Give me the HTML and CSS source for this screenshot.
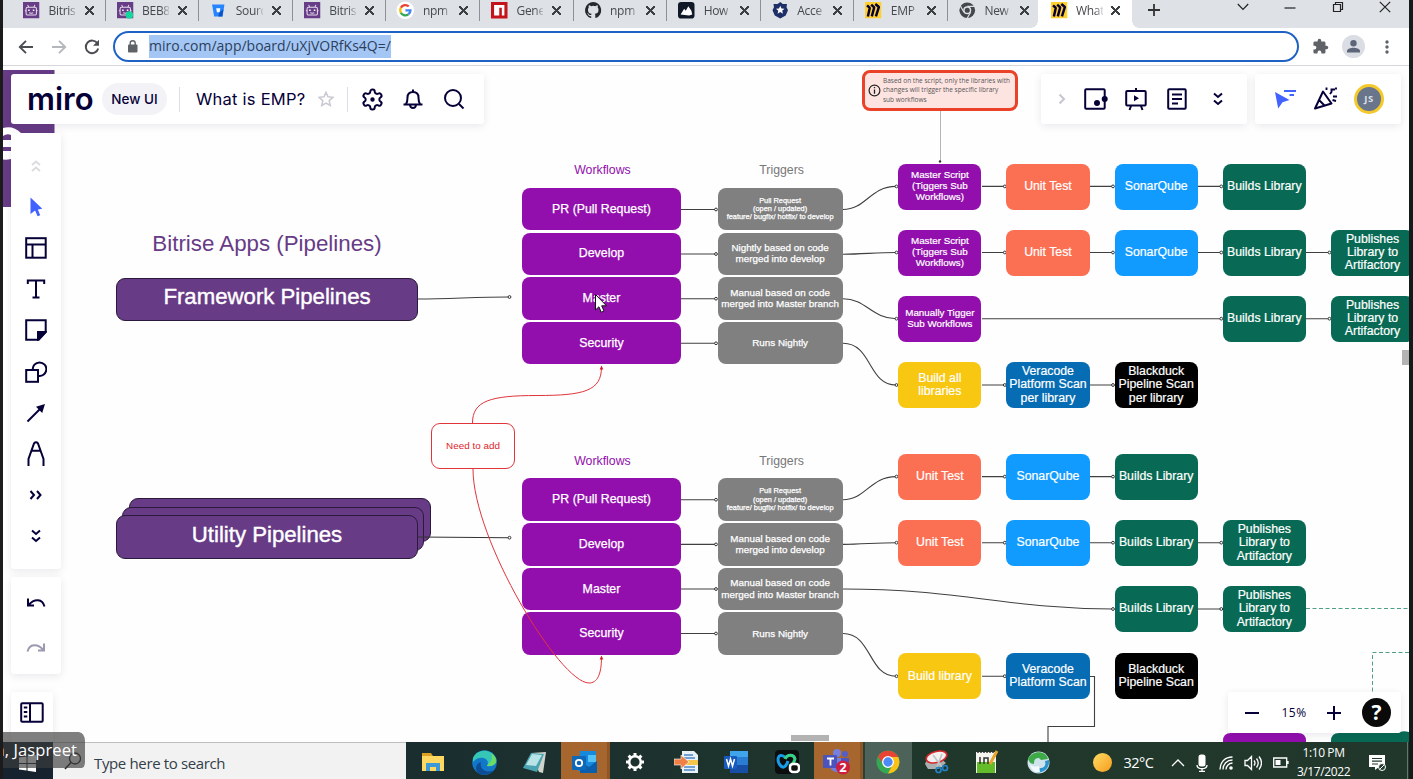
FILE: index.html
```html
<!DOCTYPE html>
<html lang="en">
<head>
<meta charset="utf-8">
<title>What is EMP?</title>
<link rel="stylesheet" href="styles.css">
</head>
<body>
<div class="screen">

  <!-- Board content -->
  <div class="canvas">
    <svg class="layer" width="1413" height="779" viewBox="0 0 1413 779">
      <path fill="#673b86" d="M3 70h51.5v63H11v74H3z"/>
      <path fill="#fff" d="M3 128q10-3 18 5H11v26q-4 1-8 .5z"/>
      <path fill="#673b86" d="M3 136q4-3 8-1v5H3zM3 147h8v4H3z"/>
      <path fill="none" stroke="#b5b5b5" d="M940.5 111v50"/>
      <circle cx="940" cy="161.500" r="1.200" fill="#333"/>
      <g fill="none" stroke="#404040" stroke-width="1.100">
        <path d="M418 299C450 299 475 297 509 297"/>
        <path d="M681 209.500h35M681 254h35M681 298.700h35M681 343.300h35"/>
        <path d="M681 499.700h35M681 544.400h35M681 589h35M681 633.500h35"/>
        <path d="M843 209.500C866 209.500 870 186.400 896 186.400"/>
        <path d="M843 254.200C862 254.200 876 252.500 896 252.500"/>
        <path d="M843 298.700C866 298.700 872 318.700 896 318.700"/>
        <path d="M843 343.300C872 343.300 868 385 896 385"/>
        <path d="M843 499.700C866 499.700 870 476.600 896 476.600"/>
        <path d="M843 544.400C862 544.400 876 542.700 896 542.700"/>
        <path d="M843 589C960 589 1010 609 1113 609"/>
        <path d="M843 633.500C872 633.500 868 676.200 896 676.200"/>
        <path d="M982 186.400h23M1090 186.400h23M1198 186.400h23M982 252.500h23M1090 252.500h23M1198 252.500h23M1306 252.500h23M982 318.700h239M1306 318.700h23M982 385h23M1090 385h23"/>
        <path d="M982 476.600h23M1090 476.600h23M982 542.700h23M1090 542.700h23M1198 542.700h23M1198 609h23M982 676.200h23"/>
        <path d="M1090 676.500h4.500v50h-46.500v16"/>
      </g>
      <g fill="#fff" stroke="#333" stroke-width="1">
        <circle cx="509.500" cy="297" r="1.400"/>
        <circle cx="716" cy="209.500" r="1.400"/><circle cx="716" cy="254" r="1.400"/><circle cx="716" cy="298.700" r="1.400"/><circle cx="716" cy="343.300" r="1.400"/>
        <circle cx="716" cy="499.700" r="1.400"/><circle cx="716" cy="544.400" r="1.400"/><circle cx="716" cy="589" r="1.400"/><circle cx="716" cy="633.500" r="1.400"/>
        <circle cx="896.500" cy="186.400" r="1.400"/><circle cx="896.500" cy="252.500" r="1.400"/><circle cx="896.500" cy="318.700" r="1.400"/><circle cx="896.500" cy="385" r="1.400"/>
        <circle cx="896.500" cy="476.600" r="1.400"/><circle cx="896.500" cy="542.700" r="1.400"/><circle cx="896.500" cy="676.200" r="1.400"/>
        <circle cx="1004.800" cy="186.400" r="1.400"/><circle cx="1004.800" cy="252.500" r="1.400"/><circle cx="1004.800" cy="385" r="1.400"/><circle cx="1004.800" cy="476.600" r="1.400"/><circle cx="1004.800" cy="542.700" r="1.400"/><circle cx="1004.800" cy="676.200" r="1.400"/>
        <circle cx="1113" cy="186.400" r="1.400"/><circle cx="1113" cy="252.500" r="1.400"/><circle cx="1113" cy="385" r="1.400"/><circle cx="1113" cy="476.600" r="1.400"/><circle cx="1113" cy="542.700" r="1.400"/><circle cx="1113" cy="609" r="1.400"/>
        <circle cx="1221.300" cy="186.400" r="1.400"/><circle cx="1221.300" cy="252.500" r="1.400"/><circle cx="1221.300" cy="318.700" r="1.400"/><circle cx="1221.300" cy="542.700" r="1.400"/><circle cx="1221.300" cy="609" r="1.400"/>
        <circle cx="1329.500" cy="252.500" r="1.400"/><circle cx="1329.500" cy="318.700" r="1.400"/>
      </g>
      <path fill="none" stroke="#4f9f88" stroke-dasharray="4 2.500" d="M1306 608.500h103M1409 652.500h-36.500v40"/>
      <path fill="#920fad" d="M1223 742v-1q0-8 8-8h67q8 0 8 8v1z"/>
      <path fill="#086a54" d="M1331 742v-1q0-8 8-8h59q4-3 11-1v10z"/>
    </svg>

    <h2 class="apps-title">Bitrise Apps (Pipelines)</h2>
    <div class="pipeline framework">Framework Pipelines</div>
    <div class="pipeline utility-back"></div>
    <div class="pipeline utility-mid"></div>
    <div class="pipeline utility">Utility Pipelines</div>

    <section class="stack workflows top">
      <h3>Workflows</h3>
      <div>PR (Pull Request)</div><div>Develop</div><div>Master</div><div>Security</div>
    </section>
    <section class="stack triggers top">
      <h3>Triggers</h3>
      <div class="tiny">Pull Request<br>(open / updated)<br>feature/ bugfix/ hotfix/ to develop</div>
      <div>Nightly based on code<br>merged into develop</div>
      <div>Manual based on code<br>merged into Master branch</div>
      <div>Runs Nightly</div>
    </section>
    <section class="stack workflows bottom">
      <h3>Workflows</h3>
      <div>PR (Pull Request)</div><div>Develop</div><div>Master</div><div>Security</div>
    </section>
    <section class="stack triggers bottom">
      <h3>Triggers</h3>
      <div class="tiny">Pull Request<br>(open / updated)<br>feature/ bugfix/ hotfix/ to develop</div>
      <div>Manual based on code<br>merged into develop</div>
      <div>Manual based on code<br>merged into Master branch</div>
      <div>Runs Nightly</div>
    </section>

    <div class="node c1 r1 script">Master Script<br>(Tiggers Sub<br>Workflows)</div>
    <div class="node c2 r1 test">Unit Test</div>
    <div class="node c3 r1 sonar">SonarQube</div>
    <div class="node c4 r1 lib">Builds Library</div>

    <div class="node c1 r2 script">Master Script<br>(Tiggers Sub<br>Workflows)</div>
    <div class="node c2 r2 test">Unit Test</div>
    <div class="node c3 r2 sonar">SonarQube</div>
    <div class="node c4 r2 lib">Builds Library</div>
    <div class="node c5 r2 lib">Publishes<br>Library to<br>Artifactory</div>

    <div class="node c1 r3 script">Manually Tigger<br>Sub Workflows</div>
    <div class="node c4 r3 lib">Builds Library</div>
    <div class="node c5 r3 lib">Publishes<br>Library to<br>Artifactory</div>

    <div class="node c1 r4 build">Build all<br>libraries</div>
    <div class="node c2 r4 vera">Veracode<br>Platform Scan<br>per library</div>
    <div class="node c3 r4 duck">Blackduck<br>Pipeline Scan<br>per library</div>

    <div class="node c1 r5 test">Unit Test</div>
    <div class="node c2 r5 sonar">SonarQube</div>
    <div class="node c3 r5 lib">Builds Library</div>

    <div class="node c1 r6 test">Unit Test</div>
    <div class="node c2 r6 sonar">SonarQube</div>
    <div class="node c3 r6 lib">Builds Library</div>
    <div class="node c4 r6 lib">Publishes<br>Library to<br>Artifactory</div>

    <div class="node c3 r7 lib">Builds Library</div>
    <div class="node c4 r7 lib">Publishes<br>Library to<br>Artifactory</div>

    <div class="node c1 r8 build">Build library</div>
    <div class="node c2 r8 vera">Veracode<br>Platform Scan</div>
    <div class="node c3 r8 duck">Blackduck<br>Pipeline Scan</div>

    <div class="callout">
      <svg width="13" height="13" viewBox="0 0 13 13"><circle cx="6.500" cy="6.500" r="5.400" fill="none" stroke="#222" stroke-width="1.200"/><path stroke="#222" stroke-width="1.300" d="M6.500 3v1.300M6.500 5.500v4.200"/></svg>
      <p>Based on the script, only the libraries with<br>changes will trigger the specific library<br>sub workflows</p>
    </div>
    <div class="need">Need to add</div>

    <svg class="layer" width="1413" height="779" viewBox="0 0 1413 779">
      <path fill="none" stroke="#333" stroke-width="1.100" d="M418 537L509 537.800"/>
      <circle cx="509.500" cy="537.700" r="1.400" fill="#fff" stroke="#333"/>
      <g fill="none" stroke="#e0353b" stroke-width="1">
        <path d="M472.500 423C472.500 401 490 395.500 537 395.500S601.500 391 601.500 367"/>
        <path d="M473 469C473 540 560 683 589 683C597 683 601.500 675 601.500 657"/>
      </g>
      <path fill="#d81e26" d="M601.500 365.500l1.800 4h-3.600zM601.500 655.500l1.800 4h-3.600z"/>
      <path fill="#fff" stroke="#111" stroke-width="1" d="M595.500 294.500v15.500l3.400-3.200 2.300 5.400 2.800-1.200-2.300-5.200h4.800z"/>
    </svg>
    <i class="thumb thumb-v"></i>
    <i class="thumb thumb-h"></i>
  </div>

  <!-- Browser tabs -->
  <header class="tabs">
    <div class="tab"><svg class="fav" viewBox="0 0 16 16"><use href="#bot"/></svg><span>Bitris</span><b></b></div>
    <div class="tab"><svg class="fav" viewBox="0 0 16 16"><use href="#bot"/><circle cx="12" cy="12.500" r="3.600" fill="#12d99b"/></svg><span>BEB8</span><b></b></div>
    <div class="tab"><svg class="fav" viewBox="0 0 16 16"><path fill="#2684ff" d="M2 2.500h12l-1.800 11.500H4z"/><path fill="#0b55c9" d="M9 10l4-3-1 7H8z"/><path fill="#fff" d="M6 6h4l-.7 4H6.700z"/></svg><span>Sourc</span><b></b></div>
    <div class="tab"><svg class="fav" viewBox="0 0 16 16"><use href="#bot"/></svg><span>Bitris</span><b></b></div>
    <div class="tab"><svg class="fav" viewBox="0 0 16 16"><circle cx="8" cy="8" r="8.500" fill="#fff"/><g fill="none" stroke-width="2.300"><path stroke="#ea4335" d="M3.700 5.600A5 5 0 0 1 11.400 4.300"/><path stroke="#fbbc05" d="M3.700 5.600A5 5 0 0 0 3.700 10.400"/><path stroke="#34a853" d="M3.700 10.400A5 5 0 0 0 11 12"/><path stroke="#4285f4" d="M11 12A5 5 0 0 0 13 8.100H8.200"/></g></svg><span>npm</span><b></b></div>
    <div class="tab"><svg class="fav" viewBox="0 0 16 16"><path fill="#c4131b" d="M0 0h16v16H0z"/><path fill="#fff" d="M3 3h10v10h-2.500V5.500H8V13H3z"/></svg><span>Gene</span><b></b></div>
    <div class="tab"><svg class="fav" viewBox="0 0 16 16"><path fill="#24292e" d="M8 0a8 8 0 0 0-2.500 15.600c.4.100.5-.2.500-.4v-1.500c-2.200.5-2.700-1-2.700-1-.4-.9-.9-1.200-.9-1.200-.7-.5.100-.5.100-.5.800.1 1.200.8 1.200.8.700 1.300 1.900.9 2.300.7.100-.5.300-.9.500-1.100-1.800-.2-3.600-.9-3.600-4 0-.9.300-1.600.8-2.100-.1-.2-.4-1 .1-2.100 0 0 .7-.2 2.200.8a7.500 7.500 0 0 1 4 0c1.500-1 2.200-.8 2.200-.8.400 1.100.2 1.900.1 2.100.5.600.8 1.300.8 2.100 0 3.100-1.900 3.800-3.700 4 .3.300.6.800.6 1.500v2.200c0 .2.100.5.500.4A8 8 0 0 0 8 0z"/></svg><span>npm</span><b></b></div>
    <div class="tab"><svg class="fav" viewBox="0 0 16 16"><rect width="16" height="16" rx="3" fill="#111827"/><path fill="#fff" d="M2.500 12L6 6.500l1.500 2L10 4l3 4.500.8 3.500-3 1.200z"/></svg><span>How</span><b></b></div>
    <div class="tab"><svg class="fav" viewBox="0 0 16 16"><path fill="#1d2f66" d="M8 0l2.500 2h4l-.4 3 1.400 3-2.200 5L8 16l-5.300-3L.5 8l1.400-3-.4-3h4z"/><path fill="#fff" d="M8 3.600l1.200 2.700 2.900.2-2.200 1.900.7 2.900L8 9.800l-2.600 1.500.7-2.900-2.200-1.900 2.900-.2z"/></svg><span>Acce</span><b></b></div>
    <div class="tab"><svg class="fav" viewBox="0 0 16 16"><use href="#miro"/></svg><span>EMP</span><b></b></div>
    <div class="tab"><svg class="fav" viewBox="0 0 16 16"><circle cx="8" cy="8" r="7.600" fill="#44474b"/><circle cx="8" cy="8" r="3.200" fill="#44474b" stroke="#dee1e6" stroke-width="1.400"/><path stroke="#dee1e6" stroke-width="1.100" fill="none" d="M8 4.200h7M4.800 10L1.400 4M11.200 10l-3.400 6"/></svg><span>New</span><b></b></div>
    <div class="tab active"><svg class="fav" viewBox="0 0 16 16"><use href="#miro"/></svg><span>What</span><b></b></div>
    <svg class="plus" width="14" height="14" viewBox="0 0 14 14"><path stroke="#333" stroke-width="1.800" d="M7 1v12M1 7h12"/></svg>
    <div class="window">
      <svg width="12" height="12" viewBox="0 0 12 12"><path d="M.8 3l5.200 5.500L11.200 3"/></svg>
      <svg width="12" height="12" viewBox="0 0 12 12"><path d="M.5 7h11"/></svg>
      <svg width="12" height="12" viewBox="0 0 12 12"><path d="M1.500 3.500h7v7h-7zM3.500 3.500v-2h7v7h-2"/></svg>
      <svg width="12" height="12" viewBox="0 0 12 12"><path d="M.8.800l10.400 10.400M11.200.800L.8 11.200"/></svg>
    </div>
  </header>

  <!-- Address bar -->
  <div class="address">
    <svg class="nav" width="16" height="16" viewBox="0 0 16 16"><path d="M15 8H2M8 1.800L1.800 8 8 14.200" stroke="#4a4d51"/></svg>
    <svg class="nav" width="16" height="16" viewBox="0 0 16 16"><path d="M1 8h13M8 1.800L14.200 8 8 14.200" stroke="#b4b7bb"/></svg>
    <svg class="nav" width="16" height="16" viewBox="0 0 16 16"><path d="M13.500 4.600A6.300 6.300 0 1 0 14.200 9.500" stroke="#4a4d51"/><path fill="#4a4d51" d="M15 .8v6H9z"/></svg>
    <div class="omnibox">
      <svg width="10" height="13" viewBox="0 0 10 13"><rect y="4.500" width="9.500" height="8" rx="1" fill="#5f6368"/><path fill="none" stroke="#5f6368" stroke-width="1.400" d="M2.200 5V3.200a2.500 2.500 0 0 1 5 0V5"/></svg>
      <span>miro.com/app/board/uXjVORfKs4Q=/</span>
    </div>
    <svg class="puzzle" width="17" height="17" viewBox="0 0 24 24"><path fill="#5f6368" d="M20.500 11H19V7a2 2 0 0 0-2-2h-4V3.500a2.500 2.500 0 0 0-5 0V5H4a2 2 0 0 0-2 2v3.800h1.500a2.700 2.700 0 0 1 0 5.400H2V20a2 2 0 0 0 2 2h3.800v-1.500a2.700 2.700 0 0 1 5.400 0V22H17a2 2 0 0 0 2-2v-4h1.500a2.500 2.500 0 0 0 0-5z"/></svg>
    <svg class="person" width="23" height="23" viewBox="0 0 23 23"><circle cx="11.500" cy="11.500" r="11.500" fill="#dadde3"/><circle cx="11.500" cy="8.300" r="3.200" fill="#5d6678"/><path fill="#5d6678" d="M5 17.500v-1.500c0-2.400 4-3.300 6.500-3.300s6.500.9 6.500 3.300v1.500z"/></svg>
    <svg class="dots" width="4" height="14" viewBox="0 0 4 14"><g fill="#5f6368"><circle cx="2" cy="2" r="1.700"/><circle cx="2" cy="7" r="1.700"/><circle cx="2" cy="12" r="1.700"/></g></svg>
  </div>

  <!-- Miro interface -->
  <main class="app">
    <div class="app-head">
      <div class="panel board-bar">
        <strong class="logo">miro</strong>
        <span class="pill">New UI</span>
        <i class="rule"></i>
        <span class="board-name">What is EMP?</span>
        <svg class="star" width="16" height="16" viewBox="0 0 16 16"><path fill="none" stroke="#c9c9d3" stroke-width="1.500" d="M8 1.200l2 4.600 5 .5-3.800 3.300 1.100 4.900L8 12l-4.300 2.500 1.100-4.900L1 6.300l5-.5z"/></svg>
        <i class="rule"></i>
        <svg class="ic" width="23" height="23" viewBox="0.500 0.500 23 23"><path d="M12.220 2h-.44a2 2 0 0 0-2 2v.18a2 2 0 0 1-1 1.730l-.43.25a2 2 0 0 1-2 0l-.15-.08a2 2 0 0 0-2.730.73l-.22.38a2 2 0 0 0 .73 2.730l.15.1a2 2 0 0 1 1 1.720v.51a2 2 0 0 1-1 1.740l-.15.09a2 2 0 0 0-.73 2.730l.22.38a2 2 0 0 0 2.730.73l.15-.08a2 2 0 0 1 2 0l.43.25a2 2 0 0 1 1 1.730V20a2 2 0 0 0 2 2h.44a2 2 0 0 0 2-2v-.18a2 2 0 0 1 1-1.730l.43-.25a2 2 0 0 1 2 0l.15.08a2 2 0 0 0 2.730-.73l.22-.39a2 2 0 0 0-.73-2.730l-.15-.08a2 2 0 0 1-1-1.740v-.5a2 2 0 0 1 1-1.740l.15-.09a2 2 0 0 0 .73-2.730l-.22-.38a2 2 0 0 0-2.730-.73l-.15.08a2 2 0 0 1-2 0l-.43-.25a2 2 0 0 1-1-1.730V4a2 2 0 0 0-2-2z"/><circle cx="12" cy="12" r="1.200" fill="#050038"/></svg>
        <svg class="ic bell" width="22" height="22" viewBox="0 0 22 22"><path d="M1.500 16.500h19M4 16c1.500-2 1.500-4 1.500-6.500C5.500 6 7.500 4 11 4s5.500 2 5.500 5.500c0 2.500 0 4.500 1.500 6.500M11 4V1.500M8 17c.5 4 5.500 4 6 0"/></svg>
        <svg class="ic" width="22" height="22" viewBox="0 0 22 22"><circle cx="10" cy="10" r="8"/><path d="M16 16l4.500 4.500"/></svg>
      </div>
      <div class="panel tools-bar">
        <svg class="ic chev" width="8" height="12" viewBox="0 0 8 12"><path stroke="#c6c6d0" d="M1.500 1.500L6 6l-4.500 4.500"/></svg>
        <svg class="ic" width="24" height="22" viewBox="0 0 24 22"><rect x="1.200" y="1.200" width="19.500" height="19.500" rx="1"/><circle cx="13" cy="15" r="3" fill="#050038" stroke="none"/><circle cx="20.700" cy="11" r="3" fill="#050038" stroke="none"/></svg>
        <svg class="ic" width="22" height="24" viewBox="0 0 22 24"><rect x="1.200" y="4" width="19.500" height="14.500" rx="1"/><path d="M11 1v3M6 19l-1.500 4M16 19l1.500 4"/><path fill="#050038" stroke="none" d="M9 8.300l5 3-5 3z"/></svg>
        <svg class="ic" width="20" height="22" viewBox="0 0 20 22"><rect x="1.200" y="1.200" width="17.500" height="19.500" rx="1"/><path d="M5 6.500h10M5 11h10M5 15.500h6"/></svg>
        <svg class="ic" width="12" height="14" viewBox="0 0 12 14"><path d="M2 1.500l4 3.500 4-3.500M2 8.500L6 12l4-3.500"/></svg>
      </div>
      <div class="panel user-bar">
        <svg class="ic" width="22" height="20" viewBox="0 0 22 20"><path fill="#4262ff" stroke="none" d="M0 3l14.500 8-7 2.200-4.300 6.300z"/><path stroke="#4262ff" stroke-width="1.800" d="M9 2h12M14.500 6h4.500"/></svg>
        <svg class="ic" width="25" height="24" viewBox="0 0 25 24"><path stroke-linejoin="round" d="M10 4.500L2 21.500l16.500-5zM6 13l6 6"/><path stroke-width="1.900" d="M13.500.5v2.500M17 7l1.500-2V2.500h3.500M20 9.500h4M19.500 13l3.500 1M23 .5v2"/></svg>
        <span class="avatar">JS</span>
      </div>
    </div>

    <div class="app-body">
      <nav class="rail">
        <div class="panel rail-main">
          <span><svg class="ic" width="12" height="14" viewBox="0 0 12 14"><path stroke="#dcdce0" d="M2 6l4-3.500L10 6M2 12l4-3.500 4 3.500"/></svg></span>
          <span><svg class="ic" width="14" height="22" viewBox="0 0 14 22"><path fill="#4262ff" stroke="none" d="M1.500 1.500l11.800 11.300-4.500.7 2.400 5.800-2.600 1-2.500-5.800-4.600 3.500z"/></svg></span>
          <span><svg class="ic" width="22" height="22" viewBox="0 0 22 22"><rect x="1.200" y="1.200" width="19.500" height="19.500"/><path d="M1 7.500h20M7.500 7.500V21"/></svg></span>
          <span><svg class="ic" width="20" height="20" viewBox="0 0 20 20"><path d="M1.800 5V1.500h16.400V5M10 1.500v17M6.500 18.500h7"/></svg></span>
          <span><svg class="ic" width="22" height="22" viewBox="0 0 22 22"><path d="M1.200 1.200h19.500v12l-7 7.500H1.200z"/><path fill="#050038" d="M20.500 13l-7.500 7.500V13z"/></svg></span>
          <span><svg class="ic" width="22" height="22" viewBox="0 0 22 22"><rect x="1.200" y="9" width="11.800" height="11.800"/><path d="M7.800 9a6.800 6.800 0 1 1 5.200 5.800"/></svg></span>
          <span><svg class="ic" width="20" height="20" viewBox="0 0 20 20"><path d="M1.500 18.500L14 6"/><path fill="#050038" stroke="none" d="M19 1l-2.800 9L10 3.800z"/></svg></span>
          <span><svg class="ic" width="18" height="26" viewBox="0 0 18 26"><path d="M1.500 25v-7L7 2.500Q9 .2 11 2.500L16.500 18v7M5 9.700h8"/></svg></span>
          <span><svg class="ic" width="14" height="12" viewBox="0 0 14 12"><path d="M1.500 2L5 6l-3.500 4M8 2l3.500 4L8 10"/></svg></span>
          <span><svg class="ic" width="12" height="14" viewBox="0 0 12 14"><path d="M2 1.500l4 3.500 4-3.500M2 8.500L6 12l4-3.500"/></svg></span>
        </div>
        <div class="panel rail-history">
          <span><svg class="ic" width="20" height="10" viewBox="0 0 20 10"><path d="M2 .5v7h6M2.500 7Q7 1.800 12 2.200T18.500 8.500"/></svg></span>
          <span><svg class="ic" width="20" height="10" viewBox="0 0 20 10"><path stroke="#9b99af" d="M18 .5v7h-6M17.500 7Q13 1.800 8 2.200T1.500 8.500"/></svg></span>
        </div>
        <div class="panel rail-frames">
          <svg class="ic" width="24" height="21" viewBox="0 0 24 21"><rect x="1.200" y="1.200" width="21.500" height="18.500" rx="1"/><path d="M10 1v19M3.800 5.500h3.500M3.800 10h3.500M3.800 14.500h3.500"/></svg>
        </div>
      </nav>
      <div class="panel zoom-bar">
        <svg class="ic" width="14" height="14" viewBox="0 0 14 14"><path d="M0 7h14"/></svg>
        <span>15%</span>
        <svg class="ic" width="14" height="14" viewBox="0 0 14 14"><path d="M0 7h14M7 0v14"/></svg>
        <b class="help">?</b>
      </div>
    </div>
  </main>

  <!-- Windows taskbar -->
  <footer class="taskbar">
    <div class="start"><svg width="17" height="17" viewBox="0 0 17 17"><path fill="#fff" d="M0 2.500l7.500-1V8H0zM8.500 1.300L17 0v8H8.500zM0 9h7.500v6.500l-7.500-1zM8.500 9H17v8l-8.500-1.300z"/></svg></div>
    <div class="search">
      <svg width="18" height="18" viewBox="0 0 18 18"><circle cx="11" cy="6.500" r="5.500" fill="none" stroke="#222" stroke-width="1.300"/><path stroke="#222" stroke-width="1.500" d="M7 10.500L1 17"/></svg>
      <span>Type here to search</span>
    </div>
    <div class="apps">
      <span><svg width="22" height="20" viewBox="0 0 22 20"><path fill="#dba122" d="M0 1h9l2 3v14H0z"/><path fill="#ffd862" d="M0 4h22v15H0z"/><path fill="#3d9ad9" d="M4 11h14v8h-4v-4H8v4H4z"/></svg></span>
      <span><svg width="25" height="25" viewBox="0 0 25 25"><circle cx="12.500" cy="12.500" r="12.300" fill="#1277c9"/><path fill="#36c6b6" d="M1 8C5-1 19-2 24 8c2 6-3 9-9 8 3-5-2-9-7-8-3 0-5 2-7 4z"/><path fill="#6edb62" d="M19 3c7 5 7 13-2 13-2 0-2 0-2-.5 5-4 6-8 4-12.500z"/><path fill="#0c4d95" d="M9 12c-2 7 6 12 13 8-4 6-18 7-18-2 0-3 2-5 5-6z"/></svg></span>
      <span><svg width="24" height="23" viewBox="0 0 24 23"><path fill="#cfd4cc" d="M8 2l15-1-3 21-4-1z"/><path fill="#4aa3b0" d="M0 17L8 2l13 1-7 18z"/><path fill="#b8e4e8" d="M3 14L9 3l10 1-6 11z"/></svg></span>
      <span class="alert"><svg width="25" height="23" viewBox="0 0 25 23"><path fill="#1689dc" d="M8 0h16v20H6z"/><path fill="#52c1f5" d="M16 4h8v7h-8z"/><path fill="#0b5eab" d="M8 22V11l9 5 8-6v12z"/><rect y="5" width="14" height="14" rx="1" fill="#0f67b7"/><circle cx="7" cy="12" r="3.200" fill="none" stroke="#fff" stroke-width="1.800"/></svg></span>
      <span><svg width="20" height="20" viewBox="0 0 20 20"><circle cx="10" cy="10" r="5.800" fill="none" stroke="#fff" stroke-width="2.500"/><path stroke="#fff" stroke-width="3" d="M10 1v3M10 16v3M1 10h3M16 10h3M3.600 3.600l2 2M14.400 14.400l2 2M3.600 16.400l2-2M14.400 5.600l2-2"/></svg></span>
      <span><svg width="25" height="24" viewBox="0 0 25 24"><path fill="#e9f1f8" d="M8 1h12l4 4v18H8z"/><path stroke="#4a87c5" stroke-width="1.500" d="M10 5h9M10 8h11M10 17h11M10 20h11"/><path fill="#f4c64e" d="M12 10h12v5H12z"/><path fill="#f08045" stroke="#fff" stroke-width=".6" d="M0 9h7V5l8 7-8 7v-4H0z"/></svg></span>
      <span><svg width="25" height="23" viewBox="0 0 25 23"><path fill="#2b7cd3" d="M6 0h18v22H6z"/><path fill="#41a5ee" d="M6 0h18v6H6z"/><path fill="#174ea6" d="M6 14h18v8H6z"/><rect y="5" width="13" height="13" rx="1" fill="#185abd"/><path fill="none" stroke="#fff" stroke-width="1.500" d="M2.500 8l2 7 2-7 2 7 2-7"/></svg></span>
      <span><svg width="25" height="25" viewBox="0 0 25 25"><rect width="24" height="24" rx="4" fill="#0b0d0f"/><path fill="none" stroke="#169be8" stroke-width="3" d="M10 7c-8-5-8 4-5 8s6 2 8-4"/><path fill="none" stroke="#37d18a" stroke-width="3" d="M10 9c2-5 9-5 10 0-1 4-3 6-6 7"/><rect x="15" y="14" width="9" height="8" rx="3" fill="#111" stroke="#fff" stroke-width="2.500"/></svg></span>
      <span class="alert"><svg width="27" height="26" viewBox="0 0 27 26"><circle cx="14" cy="4" r="4" fill="#7780df"/><circle cx="22" cy="5" r="3" fill="#545ec4"/><path fill="#747de0" d="M8 9h12v11c-3 4-9 4-12 0z"/><path fill="#4d56bd" d="M18 9h8v8h-8z"/><rect y="6" width="14" height="13" rx="1" fill="#4b53bc"/><path stroke="#fff" stroke-width="1.800" d="M4 9.500h7M7.500 9.500v7"/><circle cx="20" cy="18.500" r="7" fill="#ce1e3f"/><text class="badge" x="20" y="23" text-anchor="middle">2</text></svg></span>
      <span class="open"><svg width="24" height="24" viewBox="0 0 24 24"><circle cx="12" cy="12" r="11.500" fill="#35a853"/><path fill="#e84335" d="M2 6.500A11.500 11.500 0 0 1 22.300 7H12L7 14z"/><path fill="#fbc116" d="M12 7h10.300A11.500 11.500 0 0 1 12 23.500L17 14z"/><circle cx="12" cy="12" r="5.300" fill="#4c8bf5" stroke="#fff" stroke-width="1.300"/></svg></span>
      <span><svg width="25" height="24" viewBox="0 0 25 24"><path fill="#aab0b0" d="M1 14C3 8 8 6 16 8l6 5-8 6H4z"/><ellipse cx="12.500" cy="7" rx="10.500" ry="5.500" fill="#f5f0f0" stroke="#d8292c" stroke-width="1.600" transform="rotate(-15 12.500 7)"/><path stroke="#bfc4c6" stroke-width="1.600" d="M9 5l9 12M18 4l-5 13"/><g fill="none" stroke="#2382c5" stroke-width="1.700"><circle cx="14.500" cy="20" r="2.500"/><circle cx="21" cy="18" r="2.500"/></g></svg></span>
      <span><svg width="23" height="24" viewBox="0 0 23 24"><path fill="#f4f6ef" d="M0 2h20v21H0z"/><path fill="#63bd2b" d="M1 12h18v11H1z"/><path stroke="#333" stroke-width="1.500" stroke-dasharray="2 1" d="M1 2h18"/><path fill="none" stroke="#333" stroke-width="1.500" d="M4 14V7M8 14V8h4v6"/><path stroke="#e7a32b" stroke-width="3" d="M21 1l-7 13"/></svg></span>
      <span><svg width="23" height="23" viewBox="0 0 23 23"><circle cx="11.500" cy="11.500" r="11" fill="#cfe3ed"/><path fill="#3daa47" d="M1 8C5-1 19-1 21 8l-7 1-2-2c-4 0-5 2-5 6-3 0-5-2-6-5z"/><path fill="#2b93cf" d="M22 9c1 8-6 14-13 12l4-4c5 0 6-3 5-7z"/><path fill="#f4fafc" d="M3 13c2 3 6 3 9 2l1 6c-5 1-9-2-10-8z"/></svg></span>
    </div>
    <div class="tray">
      <i class="sun"></i>
      <span class="temp">32°C</span>
      <svg class="tr" width="14" height="10" viewBox="0 0 14 10"><path d="M1 8l6-6 6 6"/></svg>
      <svg class="tr" width="12" height="18" viewBox="0 0 12 18"><rect x="2.500" y=".5" width="7" height="12" rx="2.500" fill="#fff" stroke="none"/><path d="M1 11c0 5 10 5 10 0M6 14v3.500M3 17.300h6"/></svg>
      <svg class="tr" width="14" height="14" viewBox="0 0 14 14"><path d="M1 13.500C1 6 6 1 13.500 1M4 13.500C4 8 8 4 13.500 4M7 13.500C7 10 10 7 13.500 7"/><circle cx="12" cy="12" r="1.800" fill="#fff" stroke="none"/></svg>
      <svg class="tr" width="18" height="16" viewBox="0 0 18 16"><path d="M1 5.500h2.500l4-4v13l-4-4H1zM10 5.500q2 2.500 0 5M12.500 3.500q3.500 4.500 0 9M15 1.500q5 6.500 0 13"/></svg>
      <svg class="tr" width="16" height="11" viewBox="0 0 16 11"><path d="M.7 1h13v9H.7zM15 4v3"/><path fill="#fff" stroke="none" d="M2.500 3h5v5h-5z"/></svg>
      <div class="clock"><span>1:10 PM</span><span>3/17/2022</span></div>
      <svg class="note" width="18" height="18" viewBox="0 0 18 18"><path fill="#fff" d="M0 1h16v12h-6l-4 3v-3H0z"/><path stroke="#213b2e" stroke-width="1.200" d="M3 4.500h10M3 7.200h10M3 10h6"/><circle cx="13" cy="13" r="3.500" fill="#213b2e" stroke="#fff"/><path stroke="#fff" d="M10.500 15.500l5-5"/></svg>
      <i class="peek"></i>
    </div>
  </footer>

  <div class="speaker">n, Jaspreet</div>
</div>

<svg class="defs" width="0" height="0">
  <symbol id="bot" viewBox="0 0 16 16"><path fill="#683d87" d="M0 0h16v16H0z"/><path fill="none" stroke="#e6dcec" stroke-width="1" d="M4.500 5h7q1.500 0 1.500 1.500v5q0 1-1 1H4q-1 0-1-1v-5Q3 5 4.500 5zM5.500 5L4.500 2.800M10.500 5l1-2.200M3 8.500H1.800M13 8.500h1.200M6 10.500q2 .8 4 0"/><path fill="#fff" d="M5 7.200h1.500v1.500H5zM9.500 7.200H11v1.500H9.500z"/></symbol>
  <symbol id="miro" viewBox="0 0 16 16"><path fill="#ffd02f" d="M0 0h16v16H0z"/><path fill="none" stroke="#050038" stroke-width="2.400" stroke-linejoin="bevel" d="M2 3.200l2.600 2.600L2.800 14M6 2.600l2.900 2.700L6.600 14M10 2l3.500 2.800L10.600 14"/></symbol>
</svg>
</body>
</html>
```
FILE: styles.css
```css
* { box-sizing: border-box; }
body { margin: 0; background: #1a1a1a; }
.defs { position: absolute; }
svg { flex: none; display: block; }

.screen {
  position: relative;
  display: flex;
  flex-direction: column;
  width: 1413px;
  height: 779px;
  overflow: hidden;
  border-left: 3px solid #1b1b1b;
  border-right: 4px solid #151a1a;
  background: #fff;
  font-family: "Open Sans", "Noto Sans", sans-serif;
  color: #050038;
}

/* Board canvas: page coordinates, shifted by the window's left edge */
.canvas {
  position: absolute;
  top: 0;
  left: -3px;
  width: 1413px;
  height: 779px;
  background: #fefefe;
  font-family: "Liberation Sans", Arial, sans-serif;
}
.layer { position: absolute; left: 0; top: 0; }

.apps-title {
  position: absolute;
  left: 117px; top: 231px; width: 300px;
  margin: 0;
  font-size: 22.300px; line-height: 26px; font-weight: 400;
  text-align: center; white-space: nowrap;
  color: #673b86;
}
.pipeline {
  position: absolute;
  width: 302px; height: 43.500px;
  padding-bottom: 4px;
  display: flex; align-items: center; justify-content: center;
  border: 1.200px solid #2c1a3c;
  border-radius: 9px;
  background: #673b86;
  color: #fff;
  font-size: 22.200px;
  -webkit-text-stroke: .4px #fff;
}
.framework { left: 116px; top: 277.500px; }
.utility-back { left: 129px; top: 498px; }
.utility-mid { left: 121.500px; top: 507px; }
.utility { left: 116px; top: 515px; padding-bottom: 3px; }

.stack {
  position: absolute;
  display: flex; flex-direction: column;
  gap: 2.150px;
}
.stack.top { top: 161px; }
.stack.bottom { top: 451.500px; }
.workflows { left: 521.700px; width: 159.600px; }
.triggers { left: 717.600px; width: 125px; }
.stack h3 {
  margin: 0 0 6.850px; height: 18px;
  font-size: 12.300px; line-height: 18px; font-weight: 400; text-align: center;
}
.workflows h3 { color: #920fad; padding-left: 2px; }
.triggers h3 { color: #777; padding-left: 3px; }
.stack div {
  height: 42.500px;
  padding-bottom: 1px;
  display: flex; align-items: center; justify-content: center;
  border-radius: 8px;
  color: #fff; text-align: center; white-space: nowrap;
  -webkit-text-stroke: .25px #fff;
}
.workflows div { background: #920fad; font-size: 12.350px; }
.triggers div { background: #808080; font-size: 9.850px; line-height: 11.100px; }
.triggers .tiny { padding-bottom: 0; font-size: 7.400px; line-height: 8.200px; }

.node {
  position: absolute;
  width: 83.300px; height: 46px;
  display: flex; align-items: center; justify-content: center;
  border-radius: 8px;
  color: #fff; text-align: center; white-space: nowrap;
  font-size: 12.300px; line-height: 13.300px;
  -webkit-text-stroke: .2px #fff;
}
.c1 { left: 898.200px; } .c2 { left: 1006.300px; } .c3 { left: 1114.500px; } .c4 { left: 1222.700px; } .c5 { left: 1330.900px; }
.r1 { top: 163.500px; } .r2 { top: 229.500px; } .r3 { top: 295.700px; } .r4 { top: 362px; }
.r5 { top: 453.700px; } .r6 { top: 520px; } .r7 { top: 586px; } .r8 { top: 653.200px; }
.script { background: #920fad; font-size: 9.800px; line-height: 11px; padding-bottom: 2px; }
.test { background: #fb7053; }
.sonar { background: #129bff; }
.lib { background: #086a54; }
.build { background: #f8c712; }
.vera { background: #066cb3; }
.duck { background: #000; }

.callout {
  position: absolute;
  left: 862px; top: 70px; width: 156px; height: 41px;
  padding: 0 3px 1px 3px;
  display: flex; align-items: center; gap: 2px;
  border: 3px solid #ea4228; border-radius: 8px;
  background: #fde4e1;
}
.callout p {
  margin: 0;
  font: 6.500px/9.300px "Open Sans", sans-serif;
  color: #555; white-space: nowrap;
}
.need {
  position: absolute;
  left: 431px; top: 423px; width: 84px; height: 46px;
  padding-bottom: 2px;
  display: flex; align-items: center; justify-content: center;
  border: 1px solid #e0353b; border-radius: 9px;
  background: #fff; color: #e0252c; font-size: 9.900px;
}
.thumb { position: absolute; background: #b3b3b3; }
.thumb-v { left: 1402px; top: 350px; width: 7px; height: 15px; }
.thumb-h { left: 791px; top: 735px; width: 38px; height: 6px; }

/* Tabs */
.tabs {
  position: relative;
  display: flex; flex: none;
  height: 28px;
  padding-left: 8px;
  background: #dee1e6;
}
.tab {
  position: relative;
  display: flex; align-items: center; flex: none;
  width: 93.600px; height: 28px;
  padding: 0 10px 7px 12px;
  font-size: 12px; color: #45494d;
}
.tab::after {
  content: ""; position: absolute; right: -1px; top: 0;
  width: 1px; height: 21px; background: #8d9096;
}
.fav { width: 16.500px; height: 16.500px; overflow: visible; }
.tab span {
  width: 27px; margin-left: 9px; white-space: nowrap;
  letter-spacing: -.3px;
  -webkit-mask-image: linear-gradient(90deg, #000 70%, rgba(0, 0, 0, .2));
  mask-image: linear-gradient(90deg, #000 70%, rgba(0, 0, 0, .2));
}
.tab b {
  width: 9px; height: 9px; margin-left: 9px;
  background:
    linear-gradient(45deg, transparent 43%, #3c4043 43% 57%, transparent 57%),
    linear-gradient(-45deg, transparent 43%, #3c4043 43% 57%, transparent 57%);
}
.tab:nth-child(11)::after { display: none; }
.tab.active {
  width: 94.500px; margin-left: -3px; padding-left: 13px;
  background: #fff;
}
.tab.active b { margin-left: 8px; }
.active::before, .tab.active::after {
  content: ""; position: absolute; top: auto; bottom: 0;
  width: 7px; height: 7px;
}
.active::before { left: -7px; background: radial-gradient(circle at 0 0, transparent 6.500px, #fff 7px); }
.tab.active::after { right: -7px; background: radial-gradient(circle at 100% 0, transparent 6.500px, #fff 7px); }
.plus { margin: 3px 0 0 15px; }
.window { display: flex; margin: 1px 0 0 76px; gap: 35.300px; }
.window path { fill: none; stroke: #222; stroke-width: 1.200; }

/* Address bar */
.address {
  position: relative;
  display: flex; flex: none; align-items: center;
  height: 38px;
  padding-left: 15px;
  border-bottom: 1px solid #d5d7da;
  background: #fff;
}
.nav { margin-right: 17px; fill: none; stroke-width: 1.900; }
.omnibox {
  display: flex; align-items: center;
  width: 1186px; height: 31px; margin-left: -4px;
  padding-left: 13px;
  border: 2px solid #1e63c4; border-radius: 16px;
}
.omnibox span {
  margin-left: 11px; height: 23px;
  background: #a4c6f4; color: #2b3f5c;
  font-size: 14px; line-height: 22px; white-space: nowrap;
}
.puzzle { margin-left: 13px; }
.person { margin-left: 13px; }
.dots { margin-left: 20px; }

/* Miro panels */
.app {
  position: relative;
  display: flex; flex-direction: column; flex: 1;
  min-height: 0;
  padding: 8px 8px 0;
}
.panel { background: #fff; border-radius: 3px; box-shadow: 0 2px 8px rgba(5, 0, 56, .09); }
.ic { fill: none; stroke: #050038; stroke-width: 2; }
.app-head { display: flex; flex: none; height: 50px; }
.board-bar { display: flex; align-items: center; width: 472.500px; padding-left: 16px; }
.logo { width: 75px; font: 600 31px/34px Inter, sans-serif; }
.pill {
  width: 65px; height: 32px; border-radius: 16px; background: #f3f3f7;
  font: 500 13.500px/32px Inter, sans-serif; text-align: center;
}
.rule { width: 1px; height: 25px; margin: 0 16px 0 12px; background: #dedee5; }
.board-name { width: 110px; font: 400 16.500px/24px Inter, sans-serif; letter-spacing: .25px; white-space: nowrap; }
.star { margin-left: 12px; margin-right: 1px; }
.star + .rule { margin-right: 12.500px; }
.board-bar .ic + .ic { margin-left: 18.500px; }
.tools-bar { display: flex; align-items: center; width: 205.500px; margin-left: 557.500px; padding-left: 17px; }
.tools-bar .chev { margin-right: 18px; }
.tools-bar .ic:nth-child(3) { margin-left: 17px; }
.tools-bar .ic:nth-child(4) { margin-left: 20px; }
.tools-bar .ic:nth-child(5) { margin-left: 25px; }
.user-bar { display: flex; align-items: center; width: 145.500px; margin-left: 8.500px; padding-left: 20px; }
.user-bar .ic + .ic { margin-left: 16px; }
.avatar {
  width: 30px; height: 30px; margin-left: 16px;
  border: 3px solid #f4c92c; border-radius: 50%;
  background: #68758a; color: #dde1e8;
  font: 700 9.500px/24px "Open Sans", sans-serif; text-align: center; letter-spacing: .5px;
}
.app-body { display: flex; flex: 1; min-height: 0; justify-content: space-between; align-items: flex-start; }
.rail { display: flex; flex-direction: column; margin-top: 9px; }
.rail span { display: flex; align-items: center; justify-content: center; width: 50px; }
.rail-main { height: 436px; padding-top: 12.500px; }
.rail-main span { height: 41.100px; }
.rail-history { height: 97px; margin-top: 8px; padding-top: 3.500px; }
.rail-history span { height: 45px; }
.rail-frames { width: 42px; height: 50px; margin-top: 18px; padding: 10px 0 0 9px; }
.zoom-bar {
  display: flex; align-items: center;
  width: 173px; height: 41px; margin-top: 568px;
  padding-left: 17px;
}
.zoom-bar span { width: 28px; margin: 0 19px 0 21px; font: 400 12px/18px "Open Sans", sans-serif; letter-spacing: .5px; text-align: center; }
.help {
  width: 29px; height: 29px; margin-left: 21px; border-radius: 50%;
  background: #0a0a0a; color: #fff;
  font: 700 21px/29px "Open Sans", sans-serif; text-align: center;
}

/* Taskbar */
.taskbar {
  position: relative;
  display: flex; flex: none;
  height: 37px;
  background: linear-gradient(90deg, #17242f, #1b2f2f 35%, #20382b 70%, #22372b);
  color: #fff;
}
.start { width: 50px; padding: 13px 0 0 16px; background: #16232f; }
.search {
  display: flex; align-items: center; width: 353px;
  border-top: 1px solid #bdbdbd;
  padding: 3px 0 0 11px;
  background: #f2f2f2; color: #333e49;
}
.search svg { margin-top: -4px; }
.search span { margin-left: 12px; font-size: 15px; letter-spacing: -.36px; white-space: nowrap; }
.apps { display: flex; width: 656px; margin-left: 2px; }
.apps span { display: flex; flex: 1; align-items: center; justify-content: center; padding-top: 3px; }
.apps .alert { background: #a7662e; margin-left: 1px; border-right: 3px solid #8e5527; flex: 0 0 48.500px; }
.apps .open { background: #4d6259; border-left: 2px solid #2b4238; flex: 0 0 49px; }
.badge { font: 700 13px "Open Sans", sans-serif; fill: #fff; }
.tray { display: flex; align-items: center; margin-left: 28.500px; padding-top: 4px; }
.sun { width: 19px; height: 19px; border-radius: 50%; background: linear-gradient(135deg, #ffdc63, #f79c1e); }
.temp { width: 31px; margin-left: 12px; font-size: 14.500px; letter-spacing: -.5px; white-space: nowrap; }
.tr { fill: none; stroke: #fff; stroke-width: 1.300; margin-left: 11px; }
.temp + .tr { margin-left: 16px; }
.clock { display: flex; flex-direction: column; width: 58px; margin-left: 6px; font-size: 12px; line-height: 18.500px; letter-spacing: -.4px; text-align: center; white-space: nowrap; }
.note { margin-left: 16px; }
.peek { width: 1px; height: 37px; margin: -4px 0 0 20px; background: #64766c; }

.speaker {
  position: absolute; left: -3px; top: 732px;
  display: flex; justify-content: flex-end;
  width: 88px; height: 36px;
  padding-right: 8px;
  border-right: 3px solid transparent;
  border-radius: 0 9px 6px 0;
  background: rgba(60, 60, 60, .66) padding-box;
  color: #fff; font-size: 16.500px; line-height: 35px;
  letter-spacing: .1px; white-space: nowrap;
}
```
